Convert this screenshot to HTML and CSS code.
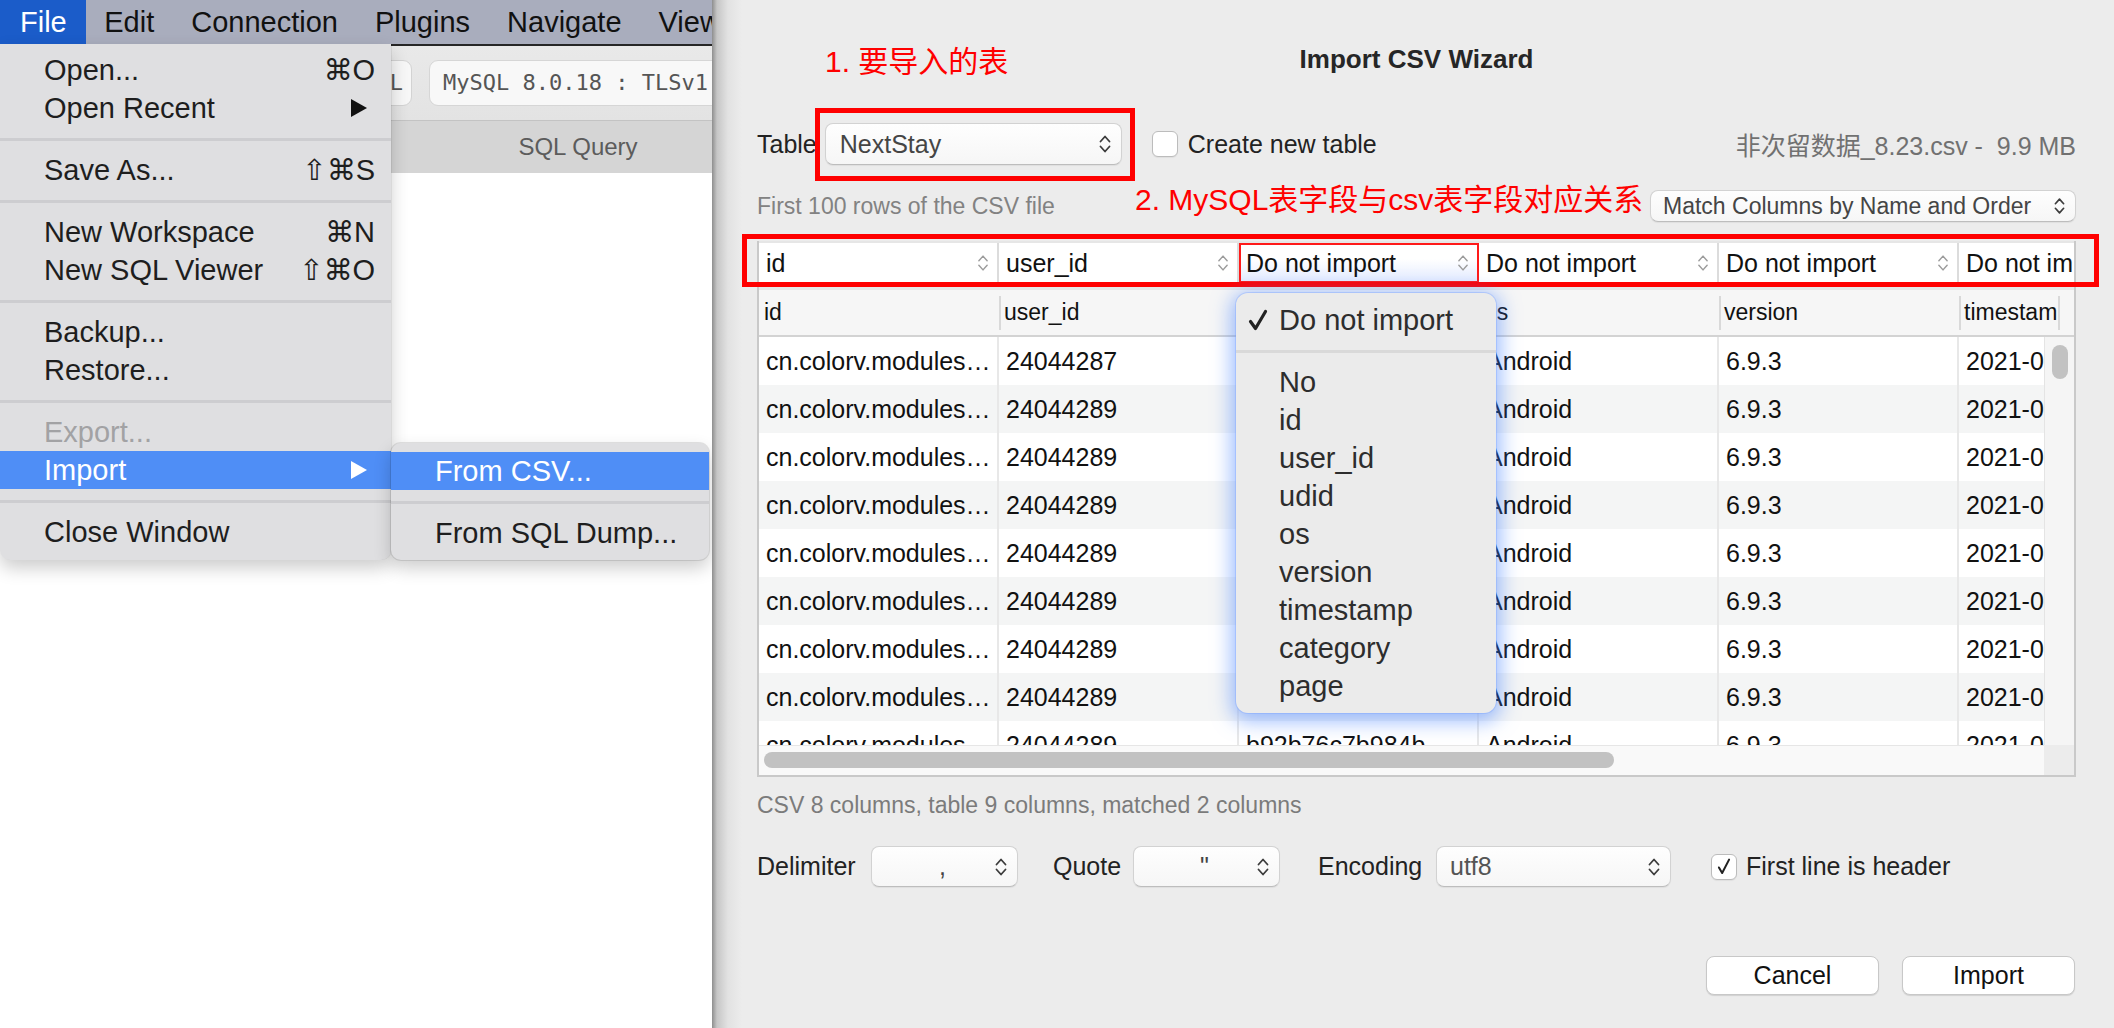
FILE: index.html
```html
<!DOCTYPE html>
<html lang="zh-CN">
<head>
<meta charset="utf-8">
<title>Import CSV Wizard</title>
<link rel="stylesheet" href="styles.css">
</head>
<body>
<div class="screen">
  <div class="appwin">
    <div class="menubar">
      <span class="mb-item active">File</span>
      <span class="mb-item">Edit</span>
      <span class="mb-item">Connection</span>
      <span class="mb-item">Plugins</span>
      <span class="mb-item">Navigate</span>
      <span class="mb-item">View</span>
    </div>
    <div class="toolbar">
      <div class="tb-btn">SSL</div>
      <div class="tb-info">MySQL 8.0.18 : TLSv1.2</div>
    </div>
    <div class="tabbar"><div class="tab">SQL Query</div></div>
    <div class="editor"></div>

    <div class="filemenu">
      <div class="mi"><span>Open...</span><span class="sc">⌘O</span></div>
      <div class="mi"><span>Open Recent</span><svg class="tri" viewBox="0 0 16 18"><path d="M0 0 L16 9 L0 18 Z" fill="currentColor"/></svg></div>
      <div class="msep"></div>
      <div class="mi"><span>Save As...</span><span class="sc">⇧⌘S</span></div>
      <div class="msep"></div>
      <div class="mi"><span>New Workspace</span><span class="sc">⌘N</span></div>
      <div class="mi"><span>New SQL Viewer</span><span class="sc">⇧⌘O</span></div>
      <div class="msep"></div>
      <div class="mi"><span>Backup...</span></div>
      <div class="mi"><span>Restore...</span></div>
      <div class="msep"></div>
      <div class="mi disabled"><span>Export...</span></div>
      <div class="mi hl"><span>Import</span><svg class="tri" viewBox="0 0 16 18"><path d="M0 0 L16 9 L0 18 Z" fill="currentColor"/></svg></div>
      <div class="msep"></div>
      <div class="mi"><span>Close Window</span></div>
    </div>
    <div class="submenu">
      <div class="mi hl"><span>From CSV...</span></div>
      <div class="msep"></div>
      <div class="mi"><span>From SQL Dump...</span></div>
    </div>
  </div>

  <div class="dialog">
    <div class="title">Import CSV Wizard</div>

    <div class="row-table">
      <span class="lbl">Table</span>
      <div class="select sel-table"><span class="sel-val">NextStay</span><svg class="chev" viewBox="0 0 14 24"><path d="M2.5 9.5 L7 4.5 L11.5 9.5 M2.5 14.5 L7 19.5 L11.5 14.5" fill="none" stroke="currentColor" stroke-width="1.8" stroke-linecap="round" stroke-linejoin="round"/></svg></div>
      <span class="checkbox cb-new"></span>
      <span class="lbl lbl-new">Create new table</span>
      <span class="fileinfo">非次留数据_8.23.csv -&nbsp; 9.9 MB</span>
    </div>

    <div class="row-sub">
      <span class="hint">First 100 rows of the CSV file</span>
      <div class="select sel-match"><span class="sel-val">Match Columns by Name and Order</span><svg class="chev" viewBox="0 0 14 24"><path d="M2.5 9.5 L7 4.5 L11.5 9.5 M2.5 14.5 L7 19.5 L11.5 14.5" fill="none" stroke="currentColor" stroke-width="1.8" stroke-linecap="round" stroke-linejoin="round"/></svg></div>
    </div>

    <div class="grid">
      <div class="maprow">
        <div class="mcell"><span>id</span><svg class="chev" viewBox="0 0 14 24"><path d="M2.5 9.5 L7 4.5 L11.5 9.5 M2.5 14.5 L7 19.5 L11.5 14.5" fill="none" stroke="currentColor" stroke-width="1.6" stroke-linecap="round" stroke-linejoin="round"/></svg></div>
        <div class="mcell"><span>user_id</span><svg class="chev" viewBox="0 0 14 24"><path d="M2.5 9.5 L7 4.5 L11.5 9.5 M2.5 14.5 L7 19.5 L11.5 14.5" fill="none" stroke="currentColor" stroke-width="1.6" stroke-linecap="round" stroke-linejoin="round"/></svg></div>
        <div class="mcell focus"><span>Do not import</span><svg class="chev" viewBox="0 0 14 24"><path d="M2.5 9.5 L7 4.5 L11.5 9.5 M2.5 14.5 L7 19.5 L11.5 14.5" fill="none" stroke="currentColor" stroke-width="1.6" stroke-linecap="round" stroke-linejoin="round"/></svg></div>
        <div class="mcell"><span>Do not import</span><svg class="chev" viewBox="0 0 14 24"><path d="M2.5 9.5 L7 4.5 L11.5 9.5 M2.5 14.5 L7 19.5 L11.5 14.5" fill="none" stroke="currentColor" stroke-width="1.6" stroke-linecap="round" stroke-linejoin="round"/></svg></div>
        <div class="mcell"><span>Do not import</span><svg class="chev" viewBox="0 0 14 24"><path d="M2.5 9.5 L7 4.5 L11.5 9.5 M2.5 14.5 L7 19.5 L11.5 14.5" fill="none" stroke="currentColor" stroke-width="1.6" stroke-linecap="round" stroke-linejoin="round"/></svg></div>
        <div class="mcell"><span>Do not import</span><svg class="chev" viewBox="0 0 14 24"><path d="M2.5 9.5 L7 4.5 L11.5 9.5 M2.5 14.5 L7 19.5 L11.5 14.5" fill="none" stroke="currentColor" stroke-width="1.6" stroke-linecap="round" stroke-linejoin="round"/></svg></div>
      </div>

      <div class="thead">
        <div class="th">id</div>
        <div class="th">user_id</div>
        <div class="th">udid</div>
        <div class="th">os</div>
        <div class="th">version</div>
        <div class="th">timestamp</div>
        <div class="th th-corner"></div>
      </div>

      <div class="tbody">
        <div class="rows">
          <div class="tr"><div class="td">cn.colorv.modules…</div><div class="td">24044287</div><div class="td">b92b76c7b984b</div><div class="td">Android</div><div class="td">6.9.3</div><div class="td">2021-08-23 10:21:05</div></div>
          <div class="tr"><div class="td">cn.colorv.modules…</div><div class="td">24044289</div><div class="td">b92b76c7b984b</div><div class="td">Android</div><div class="td">6.9.3</div><div class="td">2021-08-23 10:21:07</div></div>
          <div class="tr"><div class="td">cn.colorv.modules…</div><div class="td">24044289</div><div class="td">b92b76c7b984b</div><div class="td">Android</div><div class="td">6.9.3</div><div class="td">2021-08-23 10:21:09</div></div>
          <div class="tr"><div class="td">cn.colorv.modules…</div><div class="td">24044289</div><div class="td">b92b76c7b984b</div><div class="td">Android</div><div class="td">6.9.3</div><div class="td">2021-08-23 10:21:12</div></div>
          <div class="tr"><div class="td">cn.colorv.modules…</div><div class="td">24044289</div><div class="td">b92b76c7b984b</div><div class="td">Android</div><div class="td">6.9.3</div><div class="td">2021-08-23 10:21:15</div></div>
          <div class="tr"><div class="td">cn.colorv.modules…</div><div class="td">24044289</div><div class="td">b92b76c7b984b</div><div class="td">Android</div><div class="td">6.9.3</div><div class="td">2021-08-23 10:21:18</div></div>
          <div class="tr"><div class="td">cn.colorv.modules…</div><div class="td">24044289</div><div class="td">b92b76c7b984b</div><div class="td">Android</div><div class="td">6.9.3</div><div class="td">2021-08-23 10:21:20</div></div>
          <div class="tr"><div class="td">cn.colorv.modules…</div><div class="td">24044289</div><div class="td">b92b76c7b984b</div><div class="td">Android</div><div class="td">6.9.3</div><div class="td">2021-08-23 10:21:24</div></div>
          <div class="tr"><div class="td">cn.colorv.modules…</div><div class="td">24044289</div><div class="td">b92b76c7b984b</div><div class="td">Android</div><div class="td">6.9.3</div><div class="td">2021-08-23 10:21:27</div></div>
        </div>
        <div class="vscroll"><div class="vthumb"></div></div>
      </div>

      <div class="hscroll">
        <div class="htrack"><div class="hthumb"></div></div>
        <div class="hcorner"></div>
      </div>
    </div>

    <div class="status">CSV 8 columns, table 9 columns, matched 2 columns</div>

    <div class="row-opts">
      <span class="lbl lbl-delim">Delimiter</span>
      <div class="select sel-sm"><span class="sel-mid">,</span><svg class="chev" viewBox="0 0 14 24"><path d="M2.5 9.5 L7 4.5 L11.5 9.5 M2.5 14.5 L7 19.5 L11.5 14.5" fill="none" stroke="currentColor" stroke-width="1.8" stroke-linecap="round" stroke-linejoin="round"/></svg></div>
      <span class="lbl lbl-quote">Quote</span>
      <div class="select sel-sm"><span class="sel-mid">"</span><svg class="chev" viewBox="0 0 14 24"><path d="M2.5 9.5 L7 4.5 L11.5 9.5 M2.5 14.5 L7 19.5 L11.5 14.5" fill="none" stroke="currentColor" stroke-width="1.8" stroke-linecap="round" stroke-linejoin="round"/></svg></div>
      <span class="lbl lbl-enc">Encoding</span>
      <div class="select sel-enc"><span class="sel-val">utf8</span><svg class="chev" viewBox="0 0 14 24"><path d="M2.5 9.5 L7 4.5 L11.5 9.5 M2.5 14.5 L7 19.5 L11.5 14.5" fill="none" stroke="currentColor" stroke-width="1.8" stroke-linecap="round" stroke-linejoin="round"/></svg></div>
      <span class="checkbox cb-header"><svg viewBox="0 0 26 26"><path d="M7.5 13.5 L11 19.5 L18.5 5" fill="none" stroke="#222" stroke-width="2.2" stroke-linecap="round" stroke-linejoin="round"/></svg></span>
      <span class="lbl lbl-header">First line is header</span>
    </div>

    <div class="row-btns">
      <button class="btn">Cancel</button>
      <button class="btn">Import</button>
    </div>

    <div class="anno anno-box1"></div>
    <div class="anno anno-box2"></div>
    <div class="anno anno-text1">1. 要导入的表</div>
    <div class="anno anno-text2">2. MySQL表字段与csv表字段对应关系</div>

    <div class="popup">
      <div class="pi pi-checked"><svg class="pcheck" viewBox="0 0 20 22"><path d="M2.5 12.5 L7.5 19.5 L17.5 2.5" fill="none" stroke="#222" stroke-width="3.2" stroke-linecap="round" stroke-linejoin="round"/></svg><span>Do not import</span></div>
      <div class="psep"></div>
      <div class="pi">No</div>
      <div class="pi">id</div>
      <div class="pi">user_id</div>
      <div class="pi">udid</div>
      <div class="pi">os</div>
      <div class="pi">version</div>
      <div class="pi">timestamp</div>
      <div class="pi">category</div>
      <div class="pi">page</div>
    </div>
  </div>
</div>
</body>
</html>
```

FILE: styles.css
```css
* { box-sizing: border-box; margin: 0; padding: 0; }
html, body { width: 2114px; height: 1028px; overflow: hidden; }
body {
  font-family: "Liberation Sans", "Noto Sans CJK SC", "DejaVu Sans", sans-serif;
  color: #1d1d1d;
  background: #fff;
}
.screen { display: flex; width: 2114px; height: 1028px; overflow: hidden; }

/* ---------- background app window ---------- */
.appwin {
  position: relative;
  width: 712px;
  flex: none;
  height: 1028px;
  display: flex;
  flex-direction: column;
  background: #fff;
  overflow: hidden;
}
.menubar {
  height: 46px;
  flex: none;
  display: flex;
  background: #a9adbd;
  border-bottom: 2px solid #262626;
  font-size: 29px;
  line-height: 44px;
  color: #111;
  white-space: nowrap;
}
.mb-item { padding: 0 18.5px; }
.mb-item.active { background: #1b5cc9; color: #fff; padding: 0 19px 0 20px; }

.toolbar {
  height: 75px;
  flex: none;
  display: flex;
  align-items: center;
  background: linear-gradient(#e9e9e9, #e3e3e3);
  border-bottom: 1px solid #c3c3c3;
  white-space: nowrap;
}
.tb-btn {
  margin-left: 330px;
  width: 82px;
  height: 46px;
  flex: none;
  border: 1px solid #d3d3d3;
  border-radius: 9px;
  background: #f7f7f7;
  font-family: "DejaVu Sans Mono", monospace;
  font-size: 22px;
  line-height: 44px;
  color: #555;
  text-align: right;
  padding-right: 8px;
}
.tb-info {
  margin-left: 17px;
  width: 360px;
  height: 46px;
  flex: none;
  border: 1px solid #d6d6d6;
  border-radius: 9px;
  background: #f8f8f8;
  font-family: "DejaVu Sans Mono", monospace;
  font-size: 22px;
  line-height: 44px;
  color: #555;
  padding-left: 13px;
}
.tabbar {
  height: 52px;
  flex: none;
  display: flex;
  justify-content: flex-end;
  background: #d5d5d5;
}
.tab {
  width: 268px;
  text-align: center;
  font-size: 24px;
  line-height: 52px;
  color: #5c5c5c;
}
.editor { flex: 1; background: #fff; }

/* menus (overlays) */
.filemenu, .submenu {
  position: absolute;
  background: #dfdfe1;
  color: #1e1e1e;
  font-size: 29px;
  white-space: nowrap;
}
.filemenu {
  left: 0;
  top: 44px;
  width: 391px;
  height: 516px;
  padding: 7px 0 9px;
  border-radius: 0 0 10px 10px;
  box-shadow: 0 8px 18px rgba(0, 0, 0, 0.2), 1px 0 0 rgba(0, 0, 0, 0.06);
}
.submenu {
  left: 391px;
  top: 443px;
  width: 318px;
  height: 117px;
  padding: 9px 0 8px;
  border-radius: 10px;
  box-shadow: 0 0 0 1px rgba(0, 0, 0, 0.1), 0 8px 18px rgba(0, 0, 0, 0.2);
}
.mi {
  height: 38px;
  display: flex;
  align-items: center;
  justify-content: space-between;
  padding: 0 16px 0 44px;
}
.mi.disabled { color: #a2a2a4; }
.mi.hl { background: #4f8ef6; color: #fff; }
.sc { font-family: "Liberation Sans", "DejaVu Sans", sans-serif; }
.tri { width: 16px; height: 18px; margin-right: 8px; color: #111; }
.mi.hl .tri { color: #fff; }
.msep { height: 24px; display: flex; align-items: center; }
.msep::before { content: ""; flex: 1; height: 3px; background: #cdcdd0; }

/* ---------- dialog ---------- */
.dialog {
  position: relative;
  flex: none;
  width: 1402px;
  min-width: 0;
  height: 1028px;
  overflow: hidden;
  padding: 40px 38px 0 45px;
  background: linear-gradient(to right, #8e8e8e 0, #c6c6c6 5px, #e2e2e2 16px, #ececec 30px);
  color: #222;
}
.title {
  height: 38px;
  line-height: 38px;
  text-align: center;
  font-size: 26px;
  font-weight: 700;
  color: #262626;
}
.lbl { font-size: 25px; color: #222; white-space: nowrap; }

.select {
  display: flex;
  align-items: center;
  flex: none;
  background: linear-gradient(#fefefe, #f6f6f6);
  border: 1px solid #d2d2d2;
  border-bottom-color: #bdbdbd;
  border-radius: 8px;
  box-shadow: 0 1px 1px rgba(0, 0, 0, 0.06);
  color: #454545;
  padding: 0 9px 0 13px;
}
.sel-val { flex: 1; white-space: nowrap; overflow: hidden; }
.sel-mid { flex: 1; text-align: center; padding-left: 6px; }
.select .chev { width: 14px; height: 24px; flex: none; color: #3c3c3c; }

.row-table {
  margin-top: 45px;
  height: 42px;
  display: flex;
  align-items: center;
}
.sel-table { margin-left: 8px; width: 297px; height: 42px; font-size: 25px; padding-left: 14px; }
.checkbox {
  width: 26px;
  height: 26px;
  flex: none;
  background: #fff;
  border: 1px solid #bcbcbc;
  border-radius: 6px;
  box-shadow: 0 1px 1px rgba(0, 0, 0, 0.06);
  display: flex;
}
.checkbox svg { width: 100%; height: 100%; }
.cb-new { margin-left: 30px; }
.lbl-new { margin-left: 10px; }
.fileinfo { margin-left: auto; font-size: 25px; color: #717171; white-space: nowrap; }

.row-sub {
  margin-top: 25px;
  height: 32px;
  display: flex;
  align-items: center;
}
.hint { font-size: 23px; color: #828282; }
.sel-match { margin-left: auto; width: 426px; height: 32px; font-size: 23px; padding-left: 12px; }
.sel-match .chev { width: 13px; height: 22px; }

/* grid / table */
.grid {
  margin-top: 19px;
  border: 2px solid #c9c9c9;
  border-top: none;
  background: #fff;
  overflow: hidden;
}
.maprow {
  height: 49px;
  padding-top: 2px;
  display: grid;
  grid-template-columns: repeat(6, 240px);
  background: #e6e6e6;
  overflow: hidden;
}
.mcell {
  height: 40px;
  display: flex;
  align-items: center;
  justify-content: space-between;
  padding: 0 7px;
  font-size: 25px;
  color: #111;
  background: #fff;
  border-right: 2px solid #dcdcdc;
  white-space: nowrap;
}
.mcell .chev { width: 14px; height: 22px; flex: none; color: #9c9c9c; }
.mcell.focus {
  outline: 2px solid #ff1a1a;
  outline-offset: -2px;
  background: linear-gradient(#fff 40%, #e2eaff);
}
.thead {
  height: 47px;
  display: grid;
  grid-template-columns: repeat(5, 240px) 99px 1fr;
  background: #f6f6f6;
  border-bottom: 2px solid #d3d3d3;
  overflow: hidden;
}
.th {
  display: flex;
  align-items: center;
  padding-left: 5px;
  font-size: 23px;
  color: #111;
  white-space: nowrap;
  overflow: hidden;
  background: linear-gradient(#d9d9d9, #d9d9d9) no-repeat left center / 2px 34px;
}
.th:first-child { background: none; }
.tbody { display: flex; height: 408px; }
.rows { flex: 1; min-width: 0; overflow: hidden; }
.tr {
  display: grid;
  grid-template-columns: repeat(6, 240px);
  height: 48px;
  background: #fff;
}
.tr:nth-child(even) { background: #f4f5f5; }
.td {
  padding-left: 7px;
  font-size: 25px;
  line-height: 48px;
  color: #111;
  white-space: nowrap;
  overflow: hidden;
  border-right: 2px solid #e8e8e8;
}
.vscroll {
  width: 30px;
  flex: none;
  background: #f5f5f5;
  border-left: 1px solid #e4e4e4;
  padding: 8px 0 0 7px;
}
.vthumb { width: 16px; height: 34px; border-radius: 8px; background: #c2c2c2; }
.hscroll { height: 30px; display: flex; }
.htrack {
  flex: 1;
  min-width: 0;
  background: #f9f9f9;
  border-top: 1px solid #e6e6e6;
  padding: 6px 0 0 5px;
}
.hthumb { width: 850px; height: 16px; border-radius: 8px; background: #c2c2c2; }
.hcorner { width: 30px; flex: none; background: #ececec; }

.status {
  margin-top: 13px;
  line-height: 30px;
  font-size: 23px;
  color: #7b7b7b;
}

.row-opts {
  margin-top: 26px;
  height: 41px;
  display: flex;
  align-items: center;
}
.lbl-delim { width: 114px; }
.sel-sm { width: 147px; height: 41px; font-size: 25px; color: #444; }
.lbl-quote { margin-left: 35px; width: 80px; }
.lbl-enc { margin-left: 38px; width: 118px; }
.sel-enc { width: 235px; height: 41px; font-size: 25px; color: #555; padding-left: 13px; }
.cb-header { margin-left: 40px; }
.lbl-header { margin-left: 9px; }

.row-btns {
  margin-top: 69px;
  height: 39px;
  display: flex;
  justify-content: flex-end;
  gap: 23px;
  padding-right: 1px;
}
.btn {
  width: 173px;
  height: 39px;
  background: #fff;
  border: 1px solid #c8c8c8;
  border-radius: 8px;
  box-shadow: 0 1px 1px rgba(0, 0, 0, 0.12);
  font-family: inherit;
  font-size: 25px;
  color: #111;
}

/* annotations (drawn over the UI) */
.anno { position: absolute; }
.anno-box1 { left: 103px; top: 108px; width: 320px; height: 73px; border: 5px solid #ff0000; }
.anno-box2 { left: 30px; top: 234px; width: 1357px; height: 53px; border: 5px solid #ff0000; }
.anno-text1, .anno-text2 {
  font-family: "Liberation Sans", "Noto Sans CJK SC", sans-serif;
  font-size: 30px;
  line-height: 40px;
  color: #ff0000;
  white-space: nowrap;
}
.anno-text1 { left: 113px; top: 42px; }
.anno-text2 { left: 423px; top: 180px; }

/* dropdown popup */
.popup {
  position: absolute;
  left: 524px;
  top: 293px;
  width: 260px;
  height: 420px;
  padding: 8px 0;
  background: #ebebeb;
  border-radius: 12px;
  box-shadow: 0 0 0 1px rgba(120, 160, 255, 0.35), 0 4px 20px 4px rgba(70, 130, 255, 0.55);
  font-size: 29px;
  color: #2d2d2d;
  white-space: nowrap;
}
.pi { height: 38px; line-height: 38px; padding-left: 43px; }
.pi-checked { display: flex; align-items: center; padding-left: 12px; }
.pcheck { width: 20px; height: 22px; margin-right: 11px; }
.psep { height: 24px; display: flex; align-items: center; }
.psep::before { content: ""; flex: 1; height: 3px; background: #d9d9d9; }
```
